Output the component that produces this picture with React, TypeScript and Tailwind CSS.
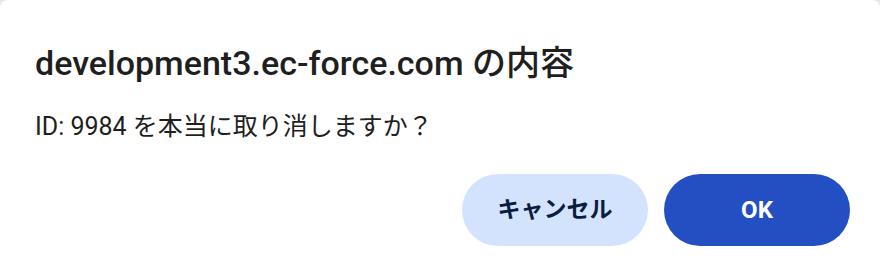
export default function App() {
  return (
    <div className="h-[276px] w-[880px] bg-[#e8e8e8]">
      <div
        className="flex h-full flex-col rounded-t-[8px] bg-white px-[35px] pt-[42px] text-[#1f1f1f]"
        style={{ fontFamily: 'Roboto, "Noto Sans CJK JP", sans-serif' }}
      >
        <h1 className="text-[34px] font-medium leading-[42px]">
          development3.ec-force.com の内容
        </h1>
        <p className="mt-[27px] text-[25px] leading-[32px]">ID: 9984 を本当に取り消しますか？</p>
        <div className="mt-[31px] flex justify-end gap-4">
          <button
            type="button"
            className="h-[72px] w-[186px] rounded-full bg-[#d3e3fd] text-[23px] font-bold text-[#0a1c3f]"
          >
            キャンセル
          </button>
          <button
            type="button"
            className="-mr-[5px] h-[72px] w-[186px] rounded-full bg-[#234fc2] text-[24px] font-bold text-white"
          >
            OK
          </button>
        </div>
      </div>
    </div>
  );
}
